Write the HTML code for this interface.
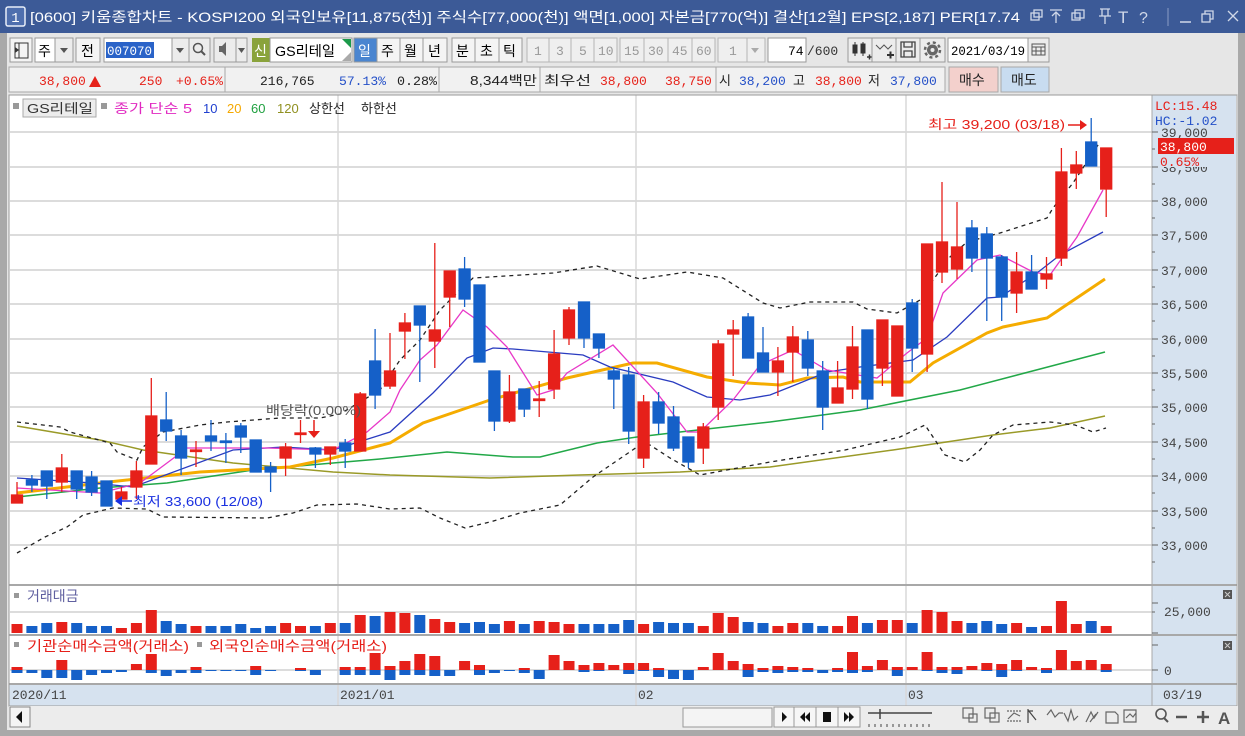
<!DOCTYPE html>
<html><head><meta charset="utf-8"><style>
html,body{margin:0;padding:0;background:#d8d8d8;}
svg{display:block;}
.k{font-family:"Liberation Sans","Noto Sans CJK KR",sans-serif;}
.m{font-family:"Liberation Mono","Noto Sans CJK KR",monospace;}
</style></head><body>
<svg width="1245" height="736" viewBox="0 0 1245 736" xmlns="http://www.w3.org/2000/svg">
<rect x="0" y="0" width="1245" height="736" fill="#e6e6e6"/>
<rect x="0" y="0" width="7" height="736" fill="#a9a9a9"/>
<rect x="1238" y="0" width="7" height="736" fill="#a9a9a9"/>
<rect x="0" y="730" width="1245" height="6" fill="#a9a9a9"/>
<!-- title -->
<rect x="0" y="0" width="1245" height="33" fill="#3c5a97"/>
<rect x="6" y="7" width="19" height="19" fill="#4f6fae" stroke="#e8eef8" stroke-width="1.5" rx="2"/>
<text x="15.5" y="22" fill="#fff" font-size="14" text-anchor="middle" class="m">1</text>
<text x="30" y="22" fill="#fff" font-size="14" class="k" textLength="990" lengthAdjust="spacingAndGlyphs">[0600] 키움종합차트 - KOSPI200 외국인보유[11,875(천)] 주식수[77,000(천)] 액면[1,000] 자본금[770(억)] 결산[12월] EPS[2,187] PER[17.74</text>
<g fill="none" stroke="#d0d8e8" stroke-width="1.3">
<rect x="1031" y="13" width="8" height="7"/><rect x="1034" y="10" width="8" height="7"/>
<path d="M1050 10h12M1056 12v11M1052 16l4-4 4 4"/>
<rect x="1072" y="13" width="8" height="7"/><rect x="1075" y="10" width="9" height="8"/>
<path d="M1100 9h10M1102 9v7h6v-7M1099 16h12M1105 16v8"/>
</g>
<text x="1118" y="23" fill="#d0d8e8" font-size="17" class="k" font-family="Liberation Serif">T</text>
<text x="1139" y="23" fill="#d0d8e8" font-size="16" class="k">?</text>
<path d="M1168 8v18" stroke="#8a9cc4"/>
<path d="M1180 22h11" stroke="#d0d8e8" stroke-width="1.5"/>
<g fill="none" stroke="#d0d8e8" stroke-width="1.3"><rect x="1202" y="14" width="8" height="8"/><path d="M1205 14v-3h8v8h-3"/></g>
<path d="M1228 11l10 10M1238 11l-10 10" stroke="#d0d8e8" stroke-width="1.3"/>

<!-- toolbar row1 -->
<g class="k" font-size="14">
<rect x="10" y="38" width="22" height="24" fill="#f4f4f4" stroke="#9a9a9a"/>
<path d="M15 43h13v15h-13zM19 43v15" fill="none" stroke="#333"/><path d="M15 47l4 3-4 3z" fill="#333"/>
<rect x="35" y="38" width="20" height="24" fill="#fff" stroke="#9a9a9a"/><text x="38" y="56">주</text>
<rect x="55" y="38" width="18" height="24" fill="#ececec" stroke="#9a9a9a"/><path d="M60 48h8l-4 5z" fill="#555"/>
<rect x="76" y="38" width="24" height="24" fill="#f4f4f4" stroke="#9a9a9a"/><text x="81" y="56">전</text>
<rect x="104" y="38" width="68" height="24" fill="#fff" stroke="#9a9a9a"/>
<rect x="106" y="42" width="48" height="16" fill="#2a63c8"/><text x="107" y="55" fill="#fff" font-size="13" class="m" textLength="45" lengthAdjust="spacingAndGlyphs">007070</text>
<rect x="172" y="38" width="17" height="24" fill="#ececec" stroke="#9a9a9a"/><path d="M176 48h8l-4 5z" fill="#555"/>
<rect x="189" y="38" width="21" height="24" fill="#ececec" stroke="#9a9a9a"/><circle cx="198" cy="48" r="4.5" fill="none" stroke="#555" stroke-width="1.5"/><path d="M201 51l4 4" stroke="#555" stroke-width="2"/>
<rect x="214" y="38" width="22" height="24" fill="#ececec" stroke="#9a9a9a"/><path d="M219 46h3l4-4v14l-4-4h-3z" fill="#666"/>
<rect x="236" y="38" width="11" height="24" fill="#ececec" stroke="#9a9a9a"/><path d="M238 48h7l-3.5 5z" fill="#555"/>
<rect x="252" y="38" width="18" height="24" fill="#8aa33c"/><text x="254" y="56" fill="#fff">신</text>
<rect x="270" y="38" width="82" height="24" fill="#fff" stroke="#9a9a9a"/><text x="275" y="56" textLength="60" lengthAdjust="spacingAndGlyphs">GS리테일</text>
<path d="M342 39h9v9z" fill="#1c9a4a"/><path d="M351 52v9h-9z" fill="#aaa"/>
<rect x="354" y="38" width="23" height="24" fill="#4a85d0" stroke="#9a9a9a"/><text x="358" y="56" fill="#fff">일</text>
<rect x="377" y="38" width="23" height="24" fill="#f4f4f4" stroke="#9a9a9a"/><text x="381" y="56">주</text>
<rect x="400" y="38" width="23" height="24" fill="#f4f4f4" stroke="#9a9a9a"/><text x="404" y="56">월</text>
<rect x="423" y="38" width="24" height="24" fill="#f4f4f4" stroke="#9a9a9a"/><text x="428" y="56">년</text>
<rect x="452" y="38" width="23" height="24" fill="#f4f4f4" stroke="#9a9a9a"/><text x="456" y="56">분</text>
<rect x="475" y="38" width="24" height="24" fill="#f4f4f4" stroke="#9a9a9a"/><text x="480" y="56">초</text>
<rect x="499" y="38" width="23" height="24" fill="#f4f4f4" stroke="#9a9a9a"/><text x="503" y="56">틱</text>
<g fill="#999" font-size="13" class="m">
<rect x="527" y="38" width="22" height="24" fill="#efefef" stroke="#b5b5b5"/><text x="534" y="55">1</text>
<rect x="549" y="38" width="22" height="24" fill="#efefef" stroke="#b5b5b5"/><text x="556" y="55">3</text>
<rect x="571" y="38" width="23" height="24" fill="#efefef" stroke="#b5b5b5"/><text x="579" y="55">5</text>
<rect x="594" y="38" width="23" height="24" fill="#efefef" stroke="#b5b5b5"/><text x="598" y="55">10</text>
<rect x="620" y="38" width="24" height="24" fill="#efefef" stroke="#b5b5b5"/><text x="624" y="55">15</text>
<rect x="644" y="38" width="24" height="24" fill="#efefef" stroke="#b5b5b5"/><text x="648" y="55">30</text>
<rect x="668" y="38" width="24" height="24" fill="#efefef" stroke="#b5b5b5"/><text x="672" y="55">45</text>
<rect x="692" y="38" width="23" height="24" fill="#efefef" stroke="#b5b5b5"/><text x="696" y="55">60</text>
<rect x="718" y="38" width="29" height="24" fill="#efefef" stroke="#b5b5b5"/><text x="729" y="55">1</text>
<rect x="747" y="38" width="18" height="24" fill="#efefef" stroke="#b5b5b5"/><path d="M751 48h8l-4 5z" fill="#aaa"/>
</g>
<rect x="768" y="38" width="38" height="24" fill="#fff" stroke="#9a9a9a"/><text x="788" y="55" font-size="13" class="m">74</text>
<text x="807" y="55" font-size="13" class="m" fill="#333">/600</text>
<rect x="848" y="38" width="24" height="24" fill="#ececec" stroke="#9a9a9a"/>
<path d="M853 45h4v8h-4zM861 44h4v9h-4zM855 42v14M863 42v14" stroke="#333" fill="#333"/><path d="M867 57h5M869.5 54.5v5" stroke="#333" stroke-width="1.5"/>
<rect x="872" y="38" width="24" height="24" fill="#ececec" stroke="#9a9a9a"/>
<path d="M876 45l4 4 4-4 4 4 4-4" fill="none" stroke="#555"/><path d="M887 55h7M890.5 51.5v7" stroke="#333" stroke-width="2"/>
<rect x="896" y="38" width="24" height="24" fill="#ececec" stroke="#9a9a9a"/>
<path d="M901 42h14v15h-14zM904 42v5h8v-5M904 57v-6h8v6" fill="none" stroke="#444" stroke-width="1.3"/>
<rect x="920" y="38" width="25" height="24" fill="#ececec" stroke="#9a9a9a"/>
<circle cx="932.5" cy="50" r="5.5" fill="#666"/><circle cx="932.5" cy="50" r="7.5" fill="none" stroke="#666" stroke-width="2.5" stroke-dasharray="3 2.9"/><circle cx="932.5" cy="50" r="2" fill="#ececec"/>
<rect x="948" y="38" width="80" height="24" fill="#fff" stroke="#9a9a9a"/><text x="951" y="55" font-size="13" class="m" textLength="74" lengthAdjust="spacingAndGlyphs">2021/03/19</text>
<rect x="1028" y="38" width="21" height="24" fill="#ececec" stroke="#9a9a9a"/><path d="M1032 44h13v11h-13zM1032 47h13M1032 51h13M1036 47v8M1041 47v8" fill="none" stroke="#555"/>
</g>
<!-- row2 -->
<g font-size="13" class="m">
<rect x="9" y="67" width="936" height="25" fill="#f1f1f1" stroke="#a8a8a8"/>
<path d="M225 67v25M439 67v25M540 67v25M716 67v25" stroke="#a8a8a8"/>
<text x="39" y="85" fill="#e6221a">38,800</text><path d="M89 87l6-11 6 11z" fill="#e6221a"/>
<text x="139" y="85" fill="#e6221a">250</text>
<text x="176" y="85" fill="#e6221a" textLength="47" lengthAdjust="spacingAndGlyphs">+0.65%</text>
<text x="260" y="85" fill="#222">216,765</text>
<text x="339" y="85" fill="#2450c8" textLength="47" lengthAdjust="spacingAndGlyphs">57.13%</text>
<text x="397" y="85" fill="#222" textLength="40" lengthAdjust="spacingAndGlyphs">0.28%</text>
<text x="470" y="85" fill="#222" class="k" textLength="67" lengthAdjust="spacingAndGlyphs">8,344백만</text>
<text x="544" y="85" fill="#222" class="k" textLength="47" lengthAdjust="spacingAndGlyphs">최우선</text>
<text x="600" y="85" fill="#e6221a">38,800</text>
<text x="665" y="85" fill="#e6221a">38,750</text>
<text x="719" y="85" fill="#222" class="k">시</text>
<text x="739" y="85" fill="#2450c8">38,200</text>
<text x="793" y="85" fill="#222" class="k">고</text>
<text x="815" y="85" fill="#e6221a">38,800</text>
<text x="868" y="85" fill="#222" class="k">저</text>
<text x="890" y="85" fill="#2450c8">37,800</text>
<rect x="949" y="67" width="49" height="25" fill="#f3d0cc" stroke="#a8a8a8"/><text x="959" y="85" class="k" font-size="14" fill="#222">매수</text>
<rect x="1001" y="67" width="48" height="25" fill="#c8dcf0" stroke="#a8a8a8"/><text x="1011" y="85" class="k" font-size="14" fill="#222">매도</text>
</g>

<!-- chart frame -->
<rect x="9" y="95" width="1229" height="611" fill="#fff"/>
<rect x="1152" y="95" width="84" height="590" fill="#d6e2ef"/>
<rect x="9" y="685" width="1227" height="21" fill="#d6e2ef"/>
<g stroke="#dcdcdc" stroke-width="2">
<path d="M10 132H1152M10 167H1152M10 201H1152M10 235H1152M10 270H1152M10 304H1152M10 339H1152M10 373H1152M10 407H1152M10 442H1152M10 476H1152M10 511H1152M10 545H1152"/>
<path d="M10 612H1152M10 670H1152"/>
</g>
<path d="M338 95V706M636 95V706M906 95V706" stroke="#d8d8d8" stroke-width="1.5"/>
<path d="M9 585H1237M9 635H1237M9 684H1237" stroke="#a8a8a8" stroke-width="2"/>
<path d="M1152 95V685" stroke="#a8a8a8"/>
<rect x="9" y="95" width="1228" height="611" fill="none" stroke="#9a9a9a"/>

<!-- legend -->
<g class="k" font-size="13">
<rect x="13" y="103" width="6" height="6" fill="#999"/>
<rect x="23" y="99" width="73" height="18" fill="#ececec" stroke="#aaa"/>
<text x="27" y="113" fill="#333" textLength="66" lengthAdjust="spacingAndGlyphs">GS리테일</text>
<rect x="101" y="103" width="6" height="6" fill="#999"/>
<text x="114" y="113" fill="#e028c0" textLength="78" lengthAdjust="spacingAndGlyphs">종가 단순 5</text>
<text x="203" y="113" fill="#2040d0">10</text>
<text x="227" y="113" fill="#f5a800">20</text>
<text x="251" y="113" fill="#20a040">60</text>
<text x="277" y="113" fill="#909020">120</text>
<text x="309" y="113" fill="#222">상한선</text>
<text x="361" y="113" fill="#222">하한선</text>
</g>

<!-- bands & MAs -->
<g fill="none">
<polyline stroke="#9a9a28" stroke-width="1.5" points="17,426 100,440 143,450 233,463 333,472 390,475 490,478 580,475 680,472 770,467 893,450 993,435 1050,428 1105,416"/>
<polyline stroke="#22a848" stroke-width="1.5" points="17,497 100,488 167,483 253,470 333,463 380,459 447,452 513,457 540,457 597,443 637,437 680,432 770,422 860,410 960,390 1105,352"/>
<polyline stroke="#f5ac00" stroke-width="3" points="17,493 100,483 200,472 290,467 333,458 390,443 423,423 490,400 567,378 633,363 657,363 707,377 747,383 780,385 807,378 843,377 860,382 910,382 933,363 987,333 1003,327 1047,318 1105,279"/>
<polyline stroke="#2a3cc0" stroke-width="1.3" points="17,478 93,483 133,487 233,450 283,447 333,450 390,432 433,393 467,358 493,348 513,349 583,355 610,367 673,382 707,397 740,400 770,395 800,383 827,372 860,367 913,360 947,337 987,298 1000,297 1037,273 1060,255 1103,232"/>
<polyline stroke="#e838c8" stroke-width="1.3" points="17,488 100,493 140,483 167,463 187,448 267,448 333,450 367,432 390,412 400,390 420,360 437,345 463,310 487,327 507,347 537,395 553,390 567,373 613,345 657,393 687,432 700,432 733,400 760,365 793,350 827,370 877,378 907,353 927,338 943,293 977,260 1000,255 1033,272 1050,275 1077,237 1103,190"/>
<polyline stroke="#222" stroke-width="1.3" stroke-dasharray="4 4" points="17,422 60,427 70,432 110,443 117,452 137,460 143,447 163,432 200,425 227,422 280,418 320,418 340,414 380,390 400,360 420,340 440,310 460,290 473,278 553,273 597,266 640,279 687,272 723,278 763,303 780,308 810,302 853,302 867,309 897,313 920,300 933,280 950,257 967,242 1000,233 1047,218 1053,208 1073,183 1100,142"/>
<polyline stroke="#222" stroke-width="1.3" stroke-dasharray="4 4" points="17,553 45,537 67,527 83,515 113,508 147,509 163,517 267,518 293,513 317,505 357,504 390,509 420,508 440,518 465,528 490,522 520,513 560,505 593,477 637,447 650,445 670,458 700,475 770,462 845,450 900,437 925,425 945,455 965,462 980,450 993,435 1013,425 1050,422 1075,425 1093,432 1106,428"/>
</g>

<!-- candles -->
<g id="c" stroke-width="1.3">
<g stroke="#e6201a" fill="#e6201a">
<line x1="17" y1="482" x2="17" y2="503"/><rect x="11.5" y="495" width="11" height="8"/>
<line x1="61.8" y1="454" x2="61.8" y2="492"/><rect x="56.3" y="468" width="11" height="14"/>
<line x1="121.4" y1="487" x2="121.4" y2="499"/><rect x="115.9" y="492" width="11" height="7"/>
<line x1="136.4" y1="461" x2="136.4" y2="499"/><rect x="130.9" y="471" width="11" height="16"/>
<line x1="151.3" y1="378" x2="151.3" y2="464"/><rect x="145.8" y="416" width="11" height="48"/>
<line x1="196" y1="441" x2="196" y2="467"/><rect x="190.5" y="450" width="11" height="1.5"/>
<line x1="285.6" y1="443" x2="285.6" y2="476"/><rect x="280.1" y="447" width="11" height="11"/>
<line x1="300.5" y1="420" x2="300.5" y2="443"/><rect x="295" y="433" width="11" height="1.5"/>
<line x1="330.3" y1="447" x2="330.3" y2="465"/><rect x="324.8" y="447" width="11" height="7"/>
<line x1="360.2" y1="392" x2="360.2" y2="451"/><rect x="354.7" y="394" width="11" height="57"/>
<line x1="390" y1="333" x2="390" y2="389"/><rect x="384.5" y="371" width="11" height="15"/>
<line x1="404.9" y1="313" x2="404.9" y2="359"/><rect x="399.4" y="323" width="11" height="8"/>
<line x1="434.8" y1="243" x2="434.8" y2="368"/><rect x="429.3" y="330" width="11" height="11"/>
<line x1="449.7" y1="271" x2="449.7" y2="327"/><rect x="444.2" y="271" width="11" height="26"/>
<line x1="509.4" y1="375" x2="509.4" y2="423"/><rect x="503.9" y="392" width="11" height="29"/>
<line x1="539.2" y1="381" x2="539.2" y2="417"/><rect x="533.7" y="399" width="11" height="1.5"/>
<line x1="554.1" y1="330" x2="554.1" y2="399"/><rect x="548.6" y="354" width="11" height="35"/>
<line x1="569" y1="307" x2="569" y2="345"/><rect x="563.5" y="310" width="11" height="28"/>
<line x1="643.6" y1="395" x2="643.6" y2="468"/><rect x="638.1" y="402" width="11" height="56"/>
<line x1="703.3" y1="423" x2="703.3" y2="464"/><rect x="697.8" y="427" width="11" height="21"/>
<line x1="718.2" y1="340" x2="718.2" y2="420"/><rect x="712.7" y="344" width="11" height="63"/>
<line x1="733.2" y1="320" x2="733.2" y2="376"/><rect x="727.7" y="330" width="11" height="4"/>
<line x1="777.9" y1="347" x2="777.9" y2="396"/><rect x="772.4" y="361" width="11" height="11"/>
<line x1="792.8" y1="326" x2="792.8" y2="382"/><rect x="787.3" y="337" width="11" height="15"/>
<line x1="837.6" y1="361" x2="837.6" y2="403"/><rect x="832.1" y="388" width="11" height="15"/>
<line x1="852.5" y1="326" x2="852.5" y2="399"/><rect x="847" y="347" width="11" height="42"/>
<line x1="882.4" y1="320" x2="882.4" y2="386"/><rect x="876.9" y="320" width="11" height="48"/>
<rect x="891.8" y="326" width="11" height="70"/>
<line x1="927.1" y1="244" x2="927.1" y2="372"/><rect x="921.6" y="244" width="11" height="110"/>
<line x1="942" y1="182" x2="942" y2="283"/><rect x="936.5" y="242" width="11" height="30"/>
<line x1="957" y1="202" x2="957" y2="279"/><rect x="951.5" y="247" width="11" height="22"/>
<line x1="1016.6" y1="252" x2="1016.6" y2="313"/><rect x="1011.1" y="272" width="11" height="21"/>
<line x1="1046.5" y1="257" x2="1046.5" y2="289"/><rect x="1041" y="274" width="11" height="5"/>
<line x1="1061.4" y1="148" x2="1061.4" y2="266"/><rect x="1055.9" y="172" width="11" height="86"/>
<line x1="1076.3" y1="151" x2="1076.3" y2="189"/><rect x="1070.8" y="165" width="11" height="8"/>
<line x1="1106.2" y1="148" x2="1106.2" y2="217"/><rect x="1100.7" y="148" width="11" height="41"/>
</g>
<g stroke="#1560c8" fill="#1560c8">
<line x1="31.9" y1="475" x2="31.9" y2="492"/><rect x="26.4" y="480" width="11" height="5"/>
<line x1="46.8" y1="471" x2="46.8" y2="499"/><rect x="41.3" y="471" width="11" height="15"/>
<line x1="76.7" y1="471" x2="76.7" y2="499"/><rect x="71.2" y="471" width="11" height="18"/>
<line x1="91.6" y1="471" x2="91.6" y2="496"/><rect x="86.1" y="477" width="11" height="15"/>
<rect x="101" y="481" width="11" height="25"/>
<line x1="166.2" y1="392" x2="166.2" y2="441"/><rect x="160.7" y="420" width="11" height="11"/>
<line x1="181.1" y1="430" x2="181.1" y2="475"/><rect x="175.6" y="436" width="11" height="22"/>
<line x1="211" y1="420" x2="211" y2="451"/><rect x="205.5" y="436" width="11" height="5"/>
<line x1="225.9" y1="433" x2="225.9" y2="463"/><rect x="220.4" y="441" width="11" height="1.5"/>
<line x1="240.8" y1="423" x2="240.8" y2="453"/><rect x="235.3" y="426" width="11" height="11"/>
<rect x="250.2" y="440" width="11" height="32"/>
<line x1="270.6" y1="462" x2="270.6" y2="492"/><rect x="265.1" y="467" width="11" height="5"/>
<line x1="315.4" y1="447" x2="315.4" y2="468"/><rect x="309.9" y="448" width="11" height="6"/>
<line x1="345.2" y1="439" x2="345.2" y2="468"/><rect x="339.7" y="443" width="11" height="8"/>
<line x1="375.1" y1="329" x2="375.1" y2="409"/><rect x="369.6" y="361" width="11" height="34"/>
<line x1="419.8" y1="306" x2="419.8" y2="382"/><rect x="414.3" y="306" width="11" height="19"/>
<line x1="464.6" y1="257" x2="464.6" y2="307"/><rect x="459.1" y="269" width="11" height="30"/>
<rect x="474" y="285" width="11" height="77"/>
<line x1="494.4" y1="371" x2="494.4" y2="431"/><rect x="488.9" y="371" width="11" height="50"/>
<line x1="524.3" y1="389" x2="524.3" y2="417"/><rect x="518.8" y="389" width="11" height="20"/>
<line x1="584" y1="302" x2="584" y2="348"/><rect x="578.5" y="302" width="11" height="36"/>
<line x1="598.9" y1="334" x2="598.9" y2="358"/><rect x="593.4" y="334" width="11" height="14"/>
<line x1="613.8" y1="367" x2="613.8" y2="409"/><rect x="608.3" y="371" width="11" height="8"/>
<line x1="628.7" y1="367" x2="628.7" y2="444"/><rect x="623.2" y="375" width="11" height="56"/>
<line x1="658.6" y1="392" x2="658.6" y2="434"/><rect x="653.1" y="402" width="11" height="21"/>
<line x1="673.5" y1="406" x2="673.5" y2="451"/><rect x="668" y="417" width="11" height="31"/>
<line x1="688.4" y1="437" x2="688.4" y2="468"/><rect x="682.9" y="437" width="11" height="25"/>
<line x1="748.1" y1="313" x2="748.1" y2="358"/><rect x="742.6" y="317" width="11" height="41"/>
<line x1="763" y1="327" x2="763" y2="372"/><rect x="757.5" y="353" width="11" height="19"/>
<line x1="807.8" y1="331" x2="807.8" y2="376"/><rect x="802.3" y="340" width="11" height="28"/>
<line x1="822.7" y1="361" x2="822.7" y2="430"/><rect x="817.2" y="371" width="11" height="36"/>
<line x1="867.4" y1="330" x2="867.4" y2="409"/><rect x="861.9" y="330" width="11" height="69"/>
<line x1="912.2" y1="299" x2="912.2" y2="372"/><rect x="906.7" y="303" width="11" height="45"/>
<line x1="971.9" y1="220" x2="971.9" y2="272"/><rect x="966.4" y="228" width="11" height="30"/>
<line x1="986.8" y1="227" x2="986.8" y2="321"/><rect x="981.3" y="234" width="11" height="24"/>
<line x1="1001.7" y1="255" x2="1001.7" y2="321"/><rect x="996.2" y="257" width="11" height="40"/>
<line x1="1031.6" y1="255" x2="1031.6" y2="289"/><rect x="1026.1" y="272" width="11" height="17"/>
<line x1="1091.2" y1="118" x2="1091.2" y2="166"/><rect x="1085.7" y="142" width="11" height="24"/>
</g>
</g>

<!-- annotations -->
<g class="k" font-size="13">
<text x="928" y="129" fill="#e6201a" textLength="137" lengthAdjust="spacingAndGlyphs">최고 39,200 (03/18)</text>
<path d="M1068 125h14" stroke="#e6201a" stroke-width="1.5"/><path d="M1080 120l7 5-7 5z" fill="#e6201a"/>
<path d="M115 501l7-5v10z" fill="#1a30e0"/><path d="M120 501h12" stroke="#1a30e0" stroke-width="1.5"/>
<text x="133" y="506" fill="#1a30e0" textLength="130" lengthAdjust="spacingAndGlyphs">최저 33,600 (12/08)</text>
<text x="266" y="415" fill="#555" textLength="95" lengthAdjust="spacingAndGlyphs">배당락(0.00%)</text>
<path d="M314 420v12" stroke="#e6201a" stroke-width="1.5"/><path d="M308 431h12l-6 7z" fill="#e6201a"/>
</g>

<!-- right axis -->
<g class="m" font-size="13" fill="#444">
<g stroke="#666"><path d="M1152 132h6M1152 167h6M1152 201h6M1152 235h6M1152 270h6M1152 304h6M1152 339h6M1152 373h6M1152 407h6M1152 442h6M1152 476h6M1152 511h6M1152 545h6M1152 149h3M1152 184h3M1152 218h3M1152 252h3M1152 287h3M1152 321h3M1152 356h3M1152 390h3M1152 424h3M1152 459h3M1152 493h3M1152 528h3M1152 562h3"/>
<path d="M1152 603h6M1152 612h3M1152 633h6M1152 645h6M1152 670h6"/></g>
<text x="1161" y="137">39,000</text><text x="1161" y="172">38,500</text>
<text x="1161" y="206">38,000</text><text x="1161" y="240">37,500</text><text x="1161" y="275">37,000</text><text x="1161" y="309">36,500</text><text x="1161" y="344">36,000</text><text x="1161" y="378">35,500</text><text x="1161" y="412">35,000</text><text x="1161" y="447">34,500</text><text x="1161" y="481">34,000</text><text x="1161" y="516">33,500</text><text x="1161" y="550">33,000</text>
<rect x="1158" y="138" width="76" height="16" fill="#e6201a"/>
<text x="1160" y="151" fill="#fff">38,800</text>
<rect x="1158" y="155" width="60" height="12" fill="#d6e2ef"/>
<text x="1160" y="166" fill="#e6201a">0.65%</text>
<text x="1155" y="110" fill="#e6201a">LC:15.48</text>
<text x="1155" y="125" fill="#2450c8">HC:-1.02</text>
<text x="1164" y="616">25,000</text>
<text x="1164" y="675">0</text>
<rect x="1223" y="590" width="9" height="9" fill="#555"/><rect x="1223" y="641" width="9" height="9" fill="#555"/>
<path d="M1225 592l5 5M1230 592l-5 5M1225 643l5 5M1230 643l-5 5" stroke="#ccc"/>
</g>

<!-- sub panels legends -->
<g class="k" font-size="14">
<rect x="14" y="593" width="5" height="5" fill="#999"/><text x="27" y="601" fill="#6060a0">거래대금</text>
<rect x="14" y="642" width="5" height="5" fill="#999"/><text x="27" y="651" fill="#e6201a" textLength="162" lengthAdjust="spacingAndGlyphs">기관순매수금액(거래소)</text>
<rect x="197" y="642" width="5" height="5" fill="#999"/><text x="209" y="651" fill="#e6201a" textLength="178" lengthAdjust="spacingAndGlyphs">외국인순매수금액(거래소)</text>
</g>

<!-- volume bars -->
<g>
<path fill="#e6201a" d="M11.5 624h11v9h-11zM56.3 622h11v11h-11zM115.9 628h11v5h-11zM130.9 623h11v10h-11zM145.8 610h11v23h-11zM190.5 626h11v7h-11zM280.1 623h11v10h-11zM295 626h11v7h-11zM324.8 623h11v10h-11zM354.7 615h11v18h-11zM384.5 612h11v21h-11zM399.4 613h11v20h-11zM429.3 619h11v14h-11zM444.2 622h11v11h-11zM503.9 621h11v12h-11zM533.7 621h11v12h-11zM548.6 622h11v11h-11zM563.5 624h11v9h-11zM638.1 624h11v9h-11zM697.8 626h11v7h-11zM712.7 613h11v20h-11zM727.7 617h11v16h-11zM772.4 626h11v7h-11zM787.3 623h11v10h-11zM832.1 626h11v7h-11zM847 616h11v17h-11zM876.9 620h11v13h-11zM891.8 620h11v13h-11zM921.6 610h11v23h-11zM936.5 612h11v21h-11zM951.5 621h11v12h-11zM1011.1 623h11v10h-11zM1041 626h11v7h-11zM1055.9 601h11v32h-11zM1070.8 624h11v9h-11zM1100.7 626h11v7h-11z"/>
<path fill="#1560c8" d="M26.4 626h11v7h-11zM41.3 623h11v10h-11zM71.2 623h11v10h-11zM86.1 626h11v7h-11zM101 626h11v7h-11zM160.7 621h11v12h-11zM175.6 624h11v9h-11zM205.5 626h11v7h-11zM220.4 626h11v7h-11zM235.3 624h11v9h-11zM250.2 628h11v5h-11zM265.1 626h11v7h-11zM309.9 626h11v7h-11zM339.7 623h11v10h-11zM369.6 616h11v17h-11zM414.3 615h11v18h-11zM459.1 623h11v10h-11zM474 622h11v11h-11zM488.9 624h11v9h-11zM518.8 624h11v9h-11zM578.5 624h11v9h-11zM593.4 624h11v9h-11zM608.3 624h11v9h-11zM623.2 620h11v13h-11zM653.1 622h11v11h-11zM668 623h11v10h-11zM682.9 623h11v10h-11zM742.6 622h11v11h-11zM757.5 623h11v10h-11zM802.3 623h11v10h-11zM817.2 626h11v7h-11zM861.9 623h11v10h-11zM906.7 623h11v10h-11zM966.4 623h11v10h-11zM981.3 621h11v12h-11zM996.2 624h11v9h-11zM1026.1 627h11v6h-11zM1085.7 621h11v12h-11z"/>
</g>
<!-- investor bars -->
<g>
<path fill="#e6201a" d="M11.5 667h11v3h-11zM56.3 660h11v10h-11zM130.9 664h11v6h-11zM145.8 654h11v16h-11zM190.5 667h11v3h-11zM250.2 666h11v4h-11zM295 668h11v2h-11zM339.7 667h11v3h-11zM354.7 667h11v3h-11zM369.6 653h11v17h-11zM384.5 666h11v4h-11zM399.4 661h11v9h-11zM414.3 654h11v16h-11zM429.3 656h11v14h-11zM459.1 661h11v9h-11zM474 665h11v5h-11zM518.8 668h11v2h-11zM548.6 655h11v15h-11zM563.5 661h11v9h-11zM578.5 665h11v5h-11zM593.4 663h11v7h-11zM608.3 665h11v5h-11zM623.2 663h11v7h-11zM638.1 663h11v7h-11zM653.1 668h11v2h-11zM697.8 667h11v3h-11zM712.7 653h11v17h-11zM727.7 661h11v9h-11zM742.6 664h11v6h-11zM757.5 668h11v2h-11zM772.4 666h11v4h-11zM787.3 667h11v3h-11zM802.3 668h11v2h-11zM832.1 668h11v2h-11zM847 652h11v18h-11zM861.9 666h11v4h-11zM876.9 660h11v10h-11zM891.8 667h11v3h-11zM906.7 667h11v3h-11zM921.6 652h11v18h-11zM936.5 667h11v3h-11zM951.5 667h11v3h-11zM966.4 666h11v4h-11zM981.3 663h11v7h-11zM996.2 664h11v6h-11zM1011.1 660h11v10h-11zM1026.1 667h11v3h-11zM1041 668h11v2h-11zM1055.9 650h11v20h-11zM1070.8 661h11v9h-11zM1085.7 660h11v10h-11zM1100.7 664h11v6h-11z"/>
<path fill="#1560c8" d="M11.5 670h11v3h-11zM26.4 670h11v3h-11zM41.3 670h11v8h-11zM56.3 670h11v8h-11zM71.2 670h11v10h-11zM86.1 670h11v5h-11zM101 670h11v3h-11zM115.9 670h11v2h-11zM145.8 670h11v3h-11zM160.7 670h11v6h-11zM175.6 670h11v3h-11zM190.5 670h11v3h-11zM205.5 670h11v1h-11zM220.4 670h11v1h-11zM235.3 670h11v1h-11zM250.2 670h11v5h-11zM265.1 670h11v1h-11zM295 670h11v1h-11zM309.9 670h11v5h-11zM339.7 670h11v5h-11zM354.7 670h11v5h-11zM369.6 670h11v5h-11zM384.5 670h11v10h-11zM399.4 670h11v5h-11zM414.3 670h11v5h-11zM429.3 670h11v6h-11zM444.2 670h11v6h-11zM474 670h11v5h-11zM488.9 670h11v3h-11zM503.9 670h11v1h-11zM518.8 670h11v3h-11zM533.7 670h11v9h-11zM578.5 670h11v2h-11zM593.4 670h11v1h-11zM623.2 670h11v4h-11zM638.1 670h11v1h-11zM653.1 670h11v7h-11zM668 670h11v9h-11zM682.9 670h11v10h-11zM742.6 670h11v7h-11zM757.5 670h11v2h-11zM772.4 670h11v3h-11zM787.3 670h11v2h-11zM802.3 670h11v2h-11zM817.2 670h11v3h-11zM832.1 670h11v2h-11zM847 670h11v3h-11zM861.9 670h11v2h-11zM891.8 670h11v6h-11zM921.6 670h11v1h-11zM936.5 670h11v3h-11zM951.5 670h11v4h-11zM981.3 670h11v1h-11zM996.2 670h11v7h-11zM1011.1 670h11v1h-11zM1041 670h11v3h-11zM1100.7 670h11v2h-11z"/>
</g>

<!-- x axis -->
<g class="m" font-size="13" fill="#444">
<text x="12" y="699">2020/11</text><text x="340" y="699">2021/01</text><text x="638" y="699">02</text><text x="908" y="699">03</text><text x="1163" y="699">03/19</text>
</g>
<path d="M1152 685v21" stroke="#a8a8a8"/>
<!-- bottom scroll -->
<rect x="9" y="706" width="1229" height="24" fill="#ececec"/>
<rect x="10" y="707" width="20" height="20" fill="#f4f4f4" stroke="#888"/><path d="M22 711v12l-6-6z" fill="#111"/>
<rect x="683" y="708" width="89" height="19" fill="#f4f4f4" stroke="#999"/>
<g fill="#111">
<rect x="774" y="707" width="20" height="20" fill="#f6f6f6" stroke="#999"/><path d="M782 712l5 5-5 5z"/>
<rect x="794" y="707" width="22" height="20" fill="#f6f6f6" stroke="#999"/><path d="M805 712l-5 5 5 5zM810 712l-5 5 5 5z"/>
<rect x="816" y="707" width="22" height="20" fill="#f6f6f6" stroke="#999"/><rect x="823" y="712" width="8" height="10"/>
<rect x="838" y="707" width="22" height="20" fill="#f6f6f6" stroke="#999"/><path d="M844 712l5 5-5 5zM849 712l5 5-5 5z"/>
</g>
<path d="M868 713h64M880 709v10" stroke="#444" stroke-width="1.5"/>
<path d="M869 724v3M875 724v3M881 724v3M887 724v3M893 724v3M899 724v3M905 724v3M911 724v3M917 724v3M923 724v3M929 724v3" stroke="#444"/>
<g fill="none" stroke="#666" stroke-width="1.2">
<rect x="963" y="708" width="10" height="10"/><rect x="969" y="714" width="8" height="8"/>
<rect x="985" y="708" width="10" height="10"/><rect x="990" y="713" width="9" height="9"/>
<path d="M1007 711h14M1007 721h14" stroke-dasharray="2 1"/><path d="M1008 719l6-6 6 3"/>
<path d="M1028 709v14M1028 710l8 10M1033 711h-5" stroke="#444"/>
<path d="M1047 715l4-5 4 7 4-4h4"/><path d="M1064 713l4 8 3-11 3 10 4-4"/>
<path d="M1086 722l5-10 3 6 4-6M1090 722l6-8"/>
<path d="M1106 712h9l3 3v8h-12z"/><path d="M1124 710h12v12h-12zM1126 718l4-4 3 3 3-4"/>
</g>
<circle cx="1161" cy="714" r="5" fill="none" stroke="#555" stroke-width="1.6"/><path d="M1164 718l4 4" stroke="#555" stroke-width="2"/>
<path d="M1176 717h11" stroke="#555" stroke-width="2.5"/>
<path d="M1197 717h12M1203 711v12" stroke="#555" stroke-width="2.5"/>
<text x="1218" y="724" font-size="17" font-weight="bold" fill="#555" class="k">A</text>
</svg>
</body></html>
